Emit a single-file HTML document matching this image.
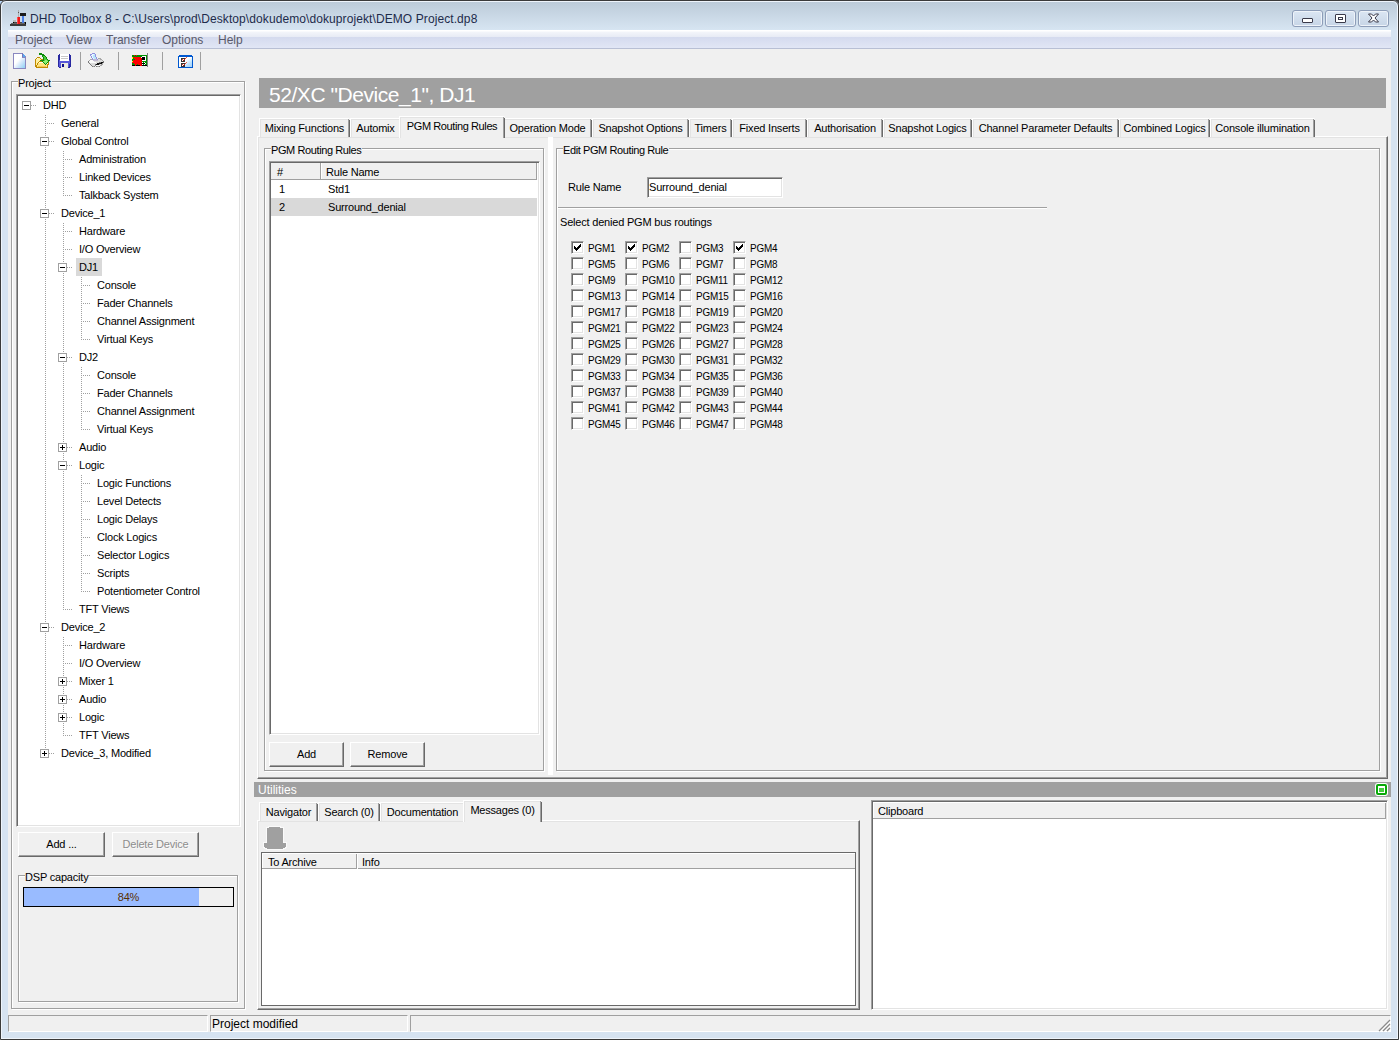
<!DOCTYPE html><html><head><meta charset="utf-8"><style>
*{margin:0;padding:0;box-sizing:content-box}
html,body{width:1399px;height:1040px;overflow:hidden;background:#3c3c3c}
body{position:relative;font-family:"Liberation Sans",sans-serif;font-size:11px;color:#000}
div{position:absolute}
.t{white-space:nowrap;line-height:13px;letter-spacing:-0.2px}
.gl{background:#f0f0f0;padding:0 1px 0 0}
.et{border:1px solid #a0a0a0;box-shadow:inset 1px 1px #fff,1px 1px #fff}
.sk{border:1px solid;border-color:#a0a0a0 #fff #fff #a0a0a0;box-shadow:inset 1px 1px #696969,inset -1px -1px #e3e3e3}
.rb{border:1px solid;border-color:#fff #696969 #696969 #fff;box-shadow:inset -1px -1px #a0a0a0,inset 1px 1px #f0f0f0;background:#f0f0f0;text-align:center;white-space:nowrap;letter-spacing:-0.2px}
.tab{border-left:1px solid #fff;border-top:1px solid #fff;border-right:1px solid #f0f0f0;box-shadow:inset -1px 0 #a0a0a0,inset 1px 1px #e3e3e3;background:#f0f0f0;border-top-left-radius:1px;border-top-right-radius:1px}
.tab:after{content:"";position:absolute;right:-1px;top:1px;bottom:0;width:1px;background:#696969}
.dv{background:repeating-linear-gradient(to bottom,#a0a0a0 0 1px,transparent 1px 2px);width:1px}
.dh{background:repeating-linear-gradient(to right,#a0a0a0 0 1px,transparent 1px 2px);height:1px}
.pm{width:7px;height:7px;border:1px solid #a0a0a0;background:#fff}
.pm:before{content:"";position:absolute;left:1px;top:3px;width:5px;height:1px;background:#000}
.pm.p:after{content:"";position:absolute;left:3px;top:1px;width:1px;height:5px;background:#000}
.cb{width:11px;height:11px;border:1px solid;border-color:#a0a0a0 #fff #fff #a0a0a0;box-shadow:inset 1px 1px #696969,inset -1px -1px #e3e3e3;background:#fff}
</style></head><body>
<div class="" style="left:0px;top:0px;width:1399px;height:1040px;background:#d6e3f1;border-radius:6px 6px 0 0"></div>
<div style="left:0;top:1px;width:2px;height:3px;background:#b8d4f4"></div>
<div class="" style="left:0px;top:0px;width:1397px;height:1038px;border:1px solid #3a3a3a;border-radius:6px 6px 0 0;box-shadow:inset 1px 1px #eef4fb,inset -1px -1px #eef4fb"></div>
<div class="" style="left:2px;top:2px;width:1395px;height:28px;background:linear-gradient(#bccbd9,#d7e5f2);border-radius:5px 5px 0 0"></div>
<svg style="position:absolute;left:10px;top:10px" width="17" height="17" shape-rendering="crispEdges">
<path d="M0 15 L3 12 H16 V16 H0 Z" fill="#4a4a4a"/><rect x="0" y="14" width="16" height="2" fill="#3a3a3a"/><rect x="1" y="13" width="15" height="1" fill="#666"/>
<rect x="3" y="10" width="3" height="2" fill="#b8b8b8"/><rect x="3" y="12" width="1" height="1" fill="#000"/><rect x="15" y="12" width="1" height="2" fill="#000"/>
<rect x="8" y="0" width="1" height="7" fill="#b0b0b0"/><rect x="8" y="2" width="1" height="1" fill="#555"/>
<rect x="7" y="7" width="3" height="7" fill="#f01818"/><rect x="7" y="7" width="1" height="7" fill="#ff5050"/>
<rect x="12" y="6" width="2" height="7" fill="#4a7fe8"/><rect x="10" y="3" width="6" height="3" fill="#1a1a1a"/>
</svg>
<div class="t" style="left:30px;top:11px;font-size:12px;line-height:16px;color:#1e2b4b;letter-spacing:0.09px">DHD Toolbox 8 - C:\Users\prod\Desktop\dokudemo\dokuprojekt\DEMO Project.dp8</div>
<div style="left:1292px;top:10px;width:29px;height:15px;border:1px solid #8d9db8;border-radius:3px;background:linear-gradient(#dbe6f3,#c7d5e6);box-shadow:inset 0 0 0 1px #eef3f9"></div>
<div style="left:1325px;top:10px;width:29px;height:15px;border:1px solid #8d9db8;border-radius:3px;background:linear-gradient(#dbe6f3,#c7d5e6);box-shadow:inset 0 0 0 1px #eef3f9"></div>
<div style="left:1358px;top:10px;width:29px;height:15px;border:1px solid #8d9db8;border-radius:3px;background:linear-gradient(#dbe6f3,#c7d5e6);box-shadow:inset 0 0 0 1px #eef3f9"></div>
<div style="left:1302px;top:18px;width:9px;height:3px;background:#fff;border:1px solid #3a3a4a;border-radius:1px"></div>
<div style="left:1335px;top:14px;width:9px;height:7px;border:1px solid #3a3a4a;background:#fff;border-radius:1px"></div><div style="left:1338px;top:17px;width:3px;height:1px;border:1px solid #3a3a4a;background:#fff"></div>
<svg style="position:absolute;left:1367px;top:13px" width="13" height="11" viewBox="0 0 13 11" ><path d="M1.5 1 H4.5 L6.5 3 L8.5 1 H11.5 L8 5 L11.5 9 H8.5 L6.5 7 L4.5 9 H1.5 L5 5 Z" fill="#fff" stroke="#3a3a4a" stroke-width="1" stroke-linejoin="round"/></svg>
<div class="" style="left:8px;top:30px;width:1383px;height:1002px;background:#f0f0f0"></div>
<div class="" style="left:8px;top:30px;width:1383px;height:18px;background:linear-gradient(#fff 0,#fff 1px,#f3f5fa 2px,#e7ebf5 7px,#d4daee 7px,#e1e6f5 18px);border-bottom:1px solid #b8bfd4"></div>
<div class="t" style="left:15px;top:33px;color:#5a5a6a;font-size:12px;line-height:14px;letter-spacing:0">Project</div>
<div class="t" style="left:66px;top:33px;color:#5a5a6a;font-size:12px;line-height:14px;letter-spacing:0">View</div>
<div class="t" style="left:106px;top:33px;color:#5a5a6a;font-size:12px;line-height:14px;letter-spacing:0">Transfer</div>
<div class="t" style="left:162px;top:33px;color:#5a5a6a;font-size:12px;line-height:14px;letter-spacing:0">Options</div>
<div class="t" style="left:218px;top:33px;color:#5a5a6a;font-size:12px;line-height:14px;letter-spacing:0">Help</div>
<svg style="position:absolute;left:13px;top:53px" width="13" height="16" shape-rendering="crispEdges">
<defs><linearGradient id="gd" x1="0.2" y1="0.25" x2="0.9" y2="1"><stop offset="0.25" stop-color="#fff"/><stop offset="0.6" stop-color="#cfe6fa"/><stop offset="1" stop-color="#96d4f6"/></linearGradient></defs>
<path d="M0 0 H10 V1 H11 V2 H12 V3 H13 V16 H0 Z" fill="#8a88c0"/><path d="M1 1 H9 V5 H12 V15 H1 Z" fill="url(#gd)"/>
<path d="M10 1 H11 V2 H12 V4 H10 Z" fill="#5aa8f0"/><rect x="9" y="0" width="1" height="5" fill="#7a78b8"/><rect x="9" y="4" width="4" height="1" fill="#8a88c0"/>
</svg>
<svg style="position:absolute;left:34px;top:53px" width="16" height="16" shape-rendering="crispEdges"><rect x="5" y="0" width="3" height="1" fill="#0a8a0a"/><rect x="5" y="1" width="5" height="1" fill="#0a8a0a"/><rect x="8" y="2" width="3" height="1" fill="#0a8a0a"/><rect x="8" y="3" width="1" height="1" fill="#0a8a0a"/><rect x="9" y="3" width="2" height="1" fill="#4cc83c"/><rect x="11" y="3" width="1" height="1" fill="#0a8a0a"/><rect x="3" y="4" width="3" height="1" fill="#c08a00"/><rect x="9" y="4" width="1" height="1" fill="#0a8a0a"/><rect x="10" y="4" width="2" height="1" fill="#4cc83c"/><rect x="12" y="4" width="1" height="1" fill="#0a8a0a"/><rect x="2" y="5" width="1" height="1" fill="#c08a00"/><rect x="3" y="5" width="1" height="1" fill="#fffde8"/><rect x="4" y="5" width="2" height="1" fill="#fff2a0"/><rect x="6" y="5" width="1" height="1" fill="#c08a00"/><rect x="9" y="5" width="1" height="1" fill="#0a8a0a"/><rect x="10" y="5" width="2" height="1" fill="#4cc83c"/><rect x="12" y="5" width="1" height="1" fill="#0a8a0a"/><rect x="1" y="6" width="1" height="1" fill="#c08a00"/><rect x="2" y="6" width="5" height="1" fill="#fff2a0"/><rect x="7" y="6" width="2" height="1" fill="#c08a00"/><rect x="9" y="6" width="1" height="1" fill="#0a8a0a"/><rect x="10" y="6" width="3" height="1" fill="#4cc83c"/><rect x="13" y="6" width="1" height="1" fill="#0a8a0a"/><rect x="1" y="7" width="1" height="1" fill="#c08a00"/><rect x="2" y="7" width="4" height="1" fill="#fff2a0"/><rect x="6" y="7" width="4" height="1" fill="#0a8a0a"/><rect x="10" y="7" width="1" height="1" fill="#4cc83c"/><rect x="11" y="7" width="2" height="1" fill="#8ef070"/><rect x="13" y="7" width="1" height="1" fill="#4cc83c"/><rect x="14" y="7" width="2" height="1" fill="#0a8a0a"/><rect x="1" y="8" width="1" height="1" fill="#c08a00"/><rect x="2" y="8" width="3" height="1" fill="#fff2a0"/><rect x="5" y="8" width="3" height="1" fill="#c08a00"/><rect x="8" y="8" width="1" height="1" fill="#0a8a0a"/><rect x="9" y="8" width="5" height="1" fill="#8ef070"/><rect x="14" y="8" width="1" height="1" fill="#0a8a0a"/><rect x="1" y="9" width="1" height="1" fill="#c08a00"/><rect x="2" y="9" width="2" height="1" fill="#fff2a0"/><rect x="4" y="9" width="1" height="1" fill="#c08a00"/><rect x="5" y="9" width="4" height="1" fill="#fffde8"/><rect x="9" y="9" width="1" height="1" fill="#0a8a0a"/><rect x="10" y="9" width="3" height="1" fill="#8ef070"/><rect x="13" y="9" width="1" height="1" fill="#0a8a0a"/><rect x="14" y="9" width="1" height="1" fill="#c08a00"/><rect x="1" y="10" width="1" height="1" fill="#c08a00"/><rect x="2" y="10" width="1" height="1" fill="#fff2a0"/><rect x="3" y="10" width="1" height="1" fill="#c08a00"/><rect x="4" y="10" width="6" height="1" fill="#ffe480"/><rect x="10" y="10" width="1" height="1" fill="#0a8a0a"/><rect x="11" y="10" width="1" height="1" fill="#8ef070"/><rect x="12" y="10" width="1" height="1" fill="#0a8a0a"/><rect x="13" y="10" width="1" height="1" fill="#fffde8"/><rect x="14" y="10" width="1" height="1" fill="#c08a00"/><rect x="1" y="11" width="1" height="1" fill="#c08a00"/><rect x="2" y="11" width="1" height="1" fill="#fff2a0"/><rect x="3" y="11" width="1" height="1" fill="#c08a00"/><rect x="4" y="11" width="7" height="1" fill="#ffe480"/><rect x="11" y="11" width="1" height="1" fill="#0a8a0a"/><rect x="12" y="11" width="1" height="1" fill="#ffe480"/><rect x="13" y="11" width="2" height="1" fill="#c08a00"/><rect x="1" y="12" width="2" height="1" fill="#c08a00"/><rect x="3" y="12" width="10" height="1" fill="#ffe480"/><rect x="13" y="12" width="1" height="1" fill="#c08a00"/><rect x="1" y="13" width="2" height="1" fill="#c08a00"/><rect x="3" y="13" width="1" height="1" fill="#ffe480"/><rect x="4" y="13" width="8" height="1" fill="#f5c850"/><rect x="12" y="13" width="1" height="1" fill="#ffe480"/><rect x="13" y="13" width="1" height="1" fill="#c08a00"/><rect x="2" y="14" width="12" height="1" fill="#c08a00"/></svg>
<svg style="position:absolute;left:58px;top:54px" width="13" height="14" shape-rendering="crispEdges"><rect x="1" y="0" width="1" height="1" fill="#2828a0"/><rect x="2" y="0" width="9" height="1" fill="#ffffff"/><rect x="11" y="0" width="1" height="1" fill="#2828a0"/><rect x="0" y="1" width="2" height="1" fill="#2828a0"/><rect x="2" y="1" width="9" height="1" fill="#ffffff"/><rect x="11" y="1" width="2" height="1" fill="#2828a0"/><rect x="0" y="2" width="2" height="1" fill="#2828a0"/><rect x="2" y="2" width="1" height="1" fill="#ffffff"/><rect x="3" y="2" width="7" height="1" fill="#c8c8c8"/><rect x="10" y="2" width="1" height="1" fill="#ffffff"/><rect x="11" y="2" width="2" height="1" fill="#2828a0"/><rect x="0" y="3" width="2" height="1" fill="#2828a0"/><rect x="2" y="3" width="9" height="1" fill="#ffffff"/><rect x="11" y="3" width="2" height="1" fill="#2828a0"/><rect x="0" y="4" width="2" height="1" fill="#2828a0"/><rect x="2" y="4" width="1" height="1" fill="#ffffff"/><rect x="3" y="4" width="7" height="1" fill="#c8c8c8"/><rect x="10" y="4" width="1" height="1" fill="#ffffff"/><rect x="11" y="4" width="2" height="1" fill="#2828a0"/><rect x="0" y="5" width="2" height="1" fill="#2828a0"/><rect x="2" y="5" width="9" height="1" fill="#ffffff"/><rect x="11" y="5" width="2" height="1" fill="#2828a0"/><rect x="0" y="6" width="1" height="1" fill="#2828a0"/><rect x="1" y="6" width="1" height="1" fill="#5858d8"/><rect x="2" y="6" width="9" height="1" fill="#ffffff"/><rect x="11" y="6" width="1" height="1" fill="#5858d8"/><rect x="12" y="6" width="1" height="1" fill="#2828a0"/><rect x="0" y="7" width="1" height="1" fill="#2828a0"/><rect x="1" y="7" width="11" height="1" fill="#5858d8"/><rect x="12" y="7" width="1" height="1" fill="#2828a0"/><rect x="0" y="8" width="1" height="1" fill="#2828a0"/><rect x="1" y="8" width="11" height="1" fill="#5858d8"/><rect x="12" y="8" width="1" height="1" fill="#2828a0"/><rect x="0" y="9" width="1" height="1" fill="#2828a0"/><rect x="1" y="9" width="2" height="1" fill="#5858d8"/><rect x="3" y="9" width="7" height="1" fill="#ebebe0"/><rect x="10" y="9" width="2" height="1" fill="#5858d8"/><rect x="12" y="9" width="1" height="1" fill="#2828a0"/><rect x="0" y="10" width="1" height="1" fill="#2828a0"/><rect x="1" y="10" width="2" height="1" fill="#5858d8"/><rect x="3" y="10" width="1" height="1" fill="#ebebe0"/><rect x="4" y="10" width="2" height="1" fill="#0c0c88"/><rect x="6" y="10" width="4" height="1" fill="#ebebe0"/><rect x="10" y="10" width="1" height="1" fill="#5858d8"/><rect x="11" y="10" width="2" height="1" fill="#2828a0"/><rect x="0" y="11" width="1" height="1" fill="#2828a0"/><rect x="1" y="11" width="2" height="1" fill="#5858d8"/><rect x="3" y="11" width="1" height="1" fill="#ebebe0"/><rect x="4" y="11" width="2" height="1" fill="#0c0c88"/><rect x="6" y="11" width="4" height="1" fill="#ebebe0"/><rect x="10" y="11" width="1" height="1" fill="#5858d8"/><rect x="11" y="11" width="2" height="1" fill="#2828a0"/><rect x="0" y="12" width="1" height="1" fill="#2828a0"/><rect x="1" y="12" width="2" height="1" fill="#5858d8"/><rect x="3" y="12" width="1" height="1" fill="#ebebe0"/><rect x="4" y="12" width="2" height="1" fill="#0c0c88"/><rect x="6" y="12" width="4" height="1" fill="#ebebe0"/><rect x="10" y="12" width="1" height="1" fill="#5858d8"/><rect x="11" y="12" width="2" height="1" fill="#2828a0"/><rect x="1" y="13" width="2" height="1" fill="#2828a0"/><rect x="3" y="13" width="7" height="1" fill="#ebebe0"/><rect x="10" y="13" width="2" height="1" fill="#2828a0"/></svg>
<svg style="position:absolute;left:88px;top:53px" width="16" height="16" shape-rendering="crispEdges"><rect x="4" y="0" width="3" height="1" fill="#9090e0"/><rect x="2" y="1" width="2" height="1" fill="#9090e0"/><rect x="4" y="1" width="2" height="1" fill="#e8f8ff"/><rect x="6" y="1" width="1" height="1" fill="#b8e4fc"/><rect x="7" y="1" width="1" height="1" fill="#9090e0"/><rect x="2" y="2" width="1" height="1" fill="#9090e0"/><rect x="3" y="2" width="2" height="1" fill="#e8f8ff"/><rect x="5" y="2" width="2" height="1" fill="#b8e4fc"/><rect x="7" y="2" width="1" height="1" fill="#9090e0"/><rect x="3" y="3" width="1" height="1" fill="#9090e0"/><rect x="4" y="3" width="1" height="1" fill="#e8f8ff"/><rect x="5" y="3" width="2" height="1" fill="#b8e4fc"/><rect x="7" y="3" width="1" height="1" fill="#9090e0"/><rect x="3" y="4" width="1" height="1" fill="#9090e0"/><rect x="4" y="4" width="1" height="1" fill="#e8f8ff"/><rect x="5" y="4" width="3" height="1" fill="#b8e4fc"/><rect x="8" y="4" width="1" height="1" fill="#9090e0"/><rect x="4" y="5" width="1" height="1" fill="#9090e0"/><rect x="5" y="5" width="1" height="1" fill="#e8f8ff"/><rect x="6" y="5" width="2" height="1" fill="#b8e4fc"/><rect x="8" y="5" width="1" height="1" fill="#9090e0"/><rect x="10" y="5" width="3" height="1" fill="#a8a8a8"/><rect x="2" y="6" width="2" height="1" fill="#a8a8a8"/><rect x="4" y="6" width="1" height="1" fill="#9090e0"/><rect x="5" y="6" width="4" height="1" fill="#c0b8d0"/><rect x="9" y="6" width="1" height="1" fill="#9090e0"/><rect x="10" y="6" width="2" height="1" fill="#dcdcdc"/><rect x="12" y="6" width="2" height="1" fill="#a8a8a8"/><rect x="1" y="7" width="1" height="1" fill="#a8a8a8"/><rect x="2" y="7" width="3" height="1" fill="#fafafa"/><rect x="5" y="7" width="5" height="1" fill="#c0b8d0"/><rect x="10" y="7" width="4" height="1" fill="#dcdcdc"/><rect x="14" y="7" width="1" height="1" fill="#a8a8a8"/><rect x="0" y="8" width="1" height="1" fill="#7a7a7a"/><rect x="1" y="8" width="5" height="1" fill="#fafafa"/><rect x="6" y="8" width="9" height="1" fill="#dcdcdc"/><rect x="15" y="8" width="1" height="1" fill="#7a7a7a"/><rect x="0" y="9" width="1" height="1" fill="#7a7a7a"/><rect x="1" y="9" width="1" height="1" fill="#dcdcdc"/><rect x="2" y="9" width="6" height="1" fill="#fafafa"/><rect x="8" y="9" width="3" height="1" fill="#dcdcdc"/><rect x="11" y="9" width="2" height="1" fill="#7a7a7a"/><rect x="13" y="9" width="2" height="1" fill="#101010"/><rect x="15" y="9" width="1" height="1" fill="#7a7a7a"/><rect x="1" y="10" width="1" height="1" fill="#7a7a7a"/><rect x="2" y="10" width="7" height="1" fill="#dcdcdc"/><rect x="9" y="10" width="5" height="1" fill="#101010"/><rect x="14" y="10" width="1" height="1" fill="#a8a8a8"/><rect x="2" y="11" width="1" height="1" fill="#7a7a7a"/><rect x="3" y="11" width="4" height="1" fill="#dcdcdc"/><rect x="7" y="11" width="1" height="1" fill="#7a7a7a"/><rect x="8" y="11" width="3" height="1" fill="#101010"/><rect x="11" y="11" width="1" height="1" fill="#a8a8a8"/><rect x="12" y="11" width="1" height="1" fill="#dcdcdc"/><rect x="13" y="11" width="2" height="1" fill="#a8a8a8"/><rect x="3" y="12" width="1" height="1" fill="#7a7a7a"/><rect x="4" y="12" width="3" height="1" fill="#dcdcdc"/><rect x="7" y="12" width="1" height="1" fill="#7a7a7a"/><rect x="8" y="12" width="4" height="1" fill="#fafafa"/><rect x="12" y="12" width="2" height="1" fill="#a8a8a8"/><rect x="4" y="13" width="1" height="1" fill="#7a7a7a"/><rect x="5" y="13" width="1" height="1" fill="#a8a8a8"/><rect x="6" y="13" width="1" height="1" fill="#7a7a7a"/><rect x="8" y="13" width="1" height="1" fill="#7a7a7a"/><rect x="9" y="13" width="2" height="1" fill="#a8a8a8"/><rect x="11" y="13" width="1" height="1" fill="#7a7a7a"/></svg>
<svg style="position:absolute;left:132px;top:55px" width="15" height="11" shape-rendering="crispEdges"><rect x="0" y="0" width="2" height="1" fill="#009000"/><rect x="2" y="0" width="1" height="1" fill="#ff0000"/><rect x="3" y="0" width="1" height="1" fill="#009000"/><rect x="4" y="0" width="1" height="1" fill="#ff0000"/><rect x="5" y="0" width="10" height="1" fill="#009000"/><rect x="0" y="1" width="10" height="1" fill="#009000"/><rect x="10" y="1" width="4" height="1" fill="#ffffff"/><rect x="14" y="1" width="1" height="1" fill="#009000"/><rect x="0" y="2" width="1" height="1" fill="#ffff00"/><rect x="1" y="2" width="8" height="1" fill="#ff0000"/><rect x="9" y="2" width="1" height="1" fill="#ffffff"/><rect x="10" y="2" width="3" height="1" fill="#000000"/><rect x="13" y="2" width="1" height="1" fill="#ffffff"/><rect x="14" y="2" width="1" height="1" fill="#009000"/><rect x="0" y="3" width="1" height="1" fill="#ffff00"/><rect x="1" y="3" width="1" height="1" fill="#009000"/><rect x="2" y="3" width="7" height="1" fill="#ff0000"/><rect x="9" y="3" width="1" height="1" fill="#c00000"/><rect x="10" y="3" width="3" height="1" fill="#000000"/><rect x="13" y="3" width="1" height="1" fill="#ffffff"/><rect x="14" y="3" width="1" height="1" fill="#009000"/><rect x="0" y="4" width="3" height="1" fill="#009000"/><rect x="3" y="4" width="6" height="1" fill="#ff0000"/><rect x="9" y="4" width="1" height="1" fill="#c00000"/><rect x="10" y="4" width="3" height="1" fill="#000000"/><rect x="13" y="4" width="1" height="1" fill="#ffffff"/><rect x="14" y="4" width="1" height="1" fill="#009000"/><rect x="0" y="5" width="1" height="1" fill="#009000"/><rect x="1" y="5" width="8" height="1" fill="#ff0000"/><rect x="9" y="5" width="1" height="1" fill="#c00000"/><rect x="10" y="5" width="4" height="1" fill="#ffffff"/><rect x="14" y="5" width="1" height="1" fill="#009000"/><rect x="0" y="6" width="1" height="1" fill="#ffff00"/><rect x="1" y="6" width="9" height="1" fill="#ff0000"/><rect x="10" y="6" width="5" height="1" fill="#009000"/><rect x="0" y="7" width="9" height="1" fill="#ff0000"/><rect x="9" y="7" width="1" height="1" fill="#c00000"/><rect x="10" y="7" width="1" height="1" fill="#ffffff"/><rect x="11" y="7" width="1" height="1" fill="#009000"/><rect x="12" y="7" width="1" height="1" fill="#ffffff"/><rect x="13" y="7" width="2" height="1" fill="#009000"/><rect x="0" y="8" width="2" height="1" fill="#009000"/><rect x="2" y="8" width="7" height="1" fill="#ff0000"/><rect x="9" y="8" width="1" height="1" fill="#c00000"/><rect x="10" y="8" width="3" height="1" fill="#000000"/><rect x="13" y="8" width="1" height="1" fill="#ffffff"/><rect x="14" y="8" width="1" height="1" fill="#009000"/><rect x="0" y="9" width="3" height="1" fill="#009000"/><rect x="3" y="9" width="2" height="1" fill="#ff0000"/><rect x="5" y="9" width="1" height="1" fill="#009000"/><rect x="6" y="9" width="3" height="1" fill="#ff0000"/><rect x="9" y="9" width="1" height="1" fill="#c00000"/><rect x="10" y="9" width="1" height="1" fill="#ffffff"/><rect x="11" y="9" width="1" height="1" fill="#009000"/><rect x="12" y="9" width="1" height="1" fill="#ffffff"/><rect x="13" y="9" width="2" height="1" fill="#009000"/><rect x="0" y="10" width="3" height="1" fill="#000000"/><rect x="3" y="10" width="1" height="1" fill="#ff0000"/><rect x="4" y="10" width="4" height="1" fill="#000000"/><rect x="8" y="10" width="2" height="1" fill="#ff0000"/><rect x="10" y="10" width="5" height="1" fill="#000000"/></svg>
<div style="left:147px;top:53px;width:1px;height:14px;background:#808080"></div>
<svg style="position:absolute;left:178px;top:55px" width="15" height="13" shape-rendering="crispEdges">
<defs><linearGradient id="gc" x1="0" y1="0" x2="1" y2="1"><stop offset="0.45" stop-color="#fff"/><stop offset="0.75" stop-color="#b8e0fc"/><stop offset="1" stop-color="#a8d0f8"/></linearGradient></defs>
<path d="M1 0 H14 V1 H15 V13 H0 V1 H1 Z" fill="#0058d0"/><rect x="1" y="2" width="13" height="10" fill="url(#gc)"/>
<rect x="3" y="3" width="4" height="4" fill="#333"/><rect x="4" y="4" width="2" height="2" fill="#fff"/>
<rect x="3" y="8" width="4" height="4" fill="#333"/><rect x="4" y="9" width="2" height="2" fill="#fff"/>
<rect x="4" y="4" width="1" height="1" fill="#f05030"/><rect x="5" y="5" width="1" height="1" fill="#c02010"/><rect x="6" y="4" width="1" height="1" fill="#c02010"/><rect x="7" y="3" width="1" height="1" fill="#e04020"/><rect x="8" y="2" width="1" height="1" fill="#f06040"/>
<rect x="4" y="9" width="1" height="1" fill="#f05030"/><rect x="5" y="10" width="1" height="1" fill="#c02010"/><rect x="6" y="9" width="1" height="1" fill="#c02010"/><rect x="7" y="8" width="1" height="1" fill="#e04020"/><rect x="8" y="7" width="1" height="1" fill="#f06040"/>
</svg>
<div class="" style="left:80px;top:52px;width:1px;height:18px;background:#a0a0a0"></div>
<div class="" style="left:118px;top:52px;width:1px;height:18px;background:#a0a0a0"></div>
<div class="" style="left:162px;top:52px;width:1px;height:18px;background:#a0a0a0"></div>
<div class="" style="left:200px;top:52px;width:1px;height:18px;background:#a0a0a0"></div>
<div class="et" style="left:11px;top:81px;width:232px;height:926px"></div>
<div class="t gl" style="left:18px;top:77px;">Project</div>
<div class="sk" style="left:16px;top:94px;width:223px;height:731px;background:#fff"></div>
<div class="dv" style="left:45px;top:115px;height:639px"></div>
<div class="dv" style="left:63px;top:151px;height:45px"></div>
<div class="dv" style="left:63px;top:223px;height:387px"></div>
<div class="dv" style="left:81px;top:277px;height:63px"></div>
<div class="dv" style="left:81px;top:367px;height:63px"></div>
<div class="dv" style="left:81px;top:475px;height:117px"></div>
<div class="dv" style="left:63px;top:637px;height:99px"></div>
<div class="dh" style="left:31px;top:105px;width:5px"></div>
<div class="dh" style="left:47px;top:123px;width:7px"></div>
<div class="dh" style="left:49px;top:141px;width:5px"></div>
<div class="dh" style="left:65px;top:159px;width:7px"></div>
<div class="dh" style="left:65px;top:177px;width:7px"></div>
<div class="dh" style="left:65px;top:195px;width:7px"></div>
<div class="dh" style="left:49px;top:213px;width:5px"></div>
<div class="dh" style="left:65px;top:231px;width:7px"></div>
<div class="dh" style="left:65px;top:249px;width:7px"></div>
<div class="dh" style="left:67px;top:267px;width:5px"></div>
<div class="dh" style="left:83px;top:285px;width:7px"></div>
<div class="dh" style="left:83px;top:303px;width:7px"></div>
<div class="dh" style="left:83px;top:321px;width:7px"></div>
<div class="dh" style="left:83px;top:339px;width:7px"></div>
<div class="dh" style="left:67px;top:357px;width:5px"></div>
<div class="dh" style="left:83px;top:375px;width:7px"></div>
<div class="dh" style="left:83px;top:393px;width:7px"></div>
<div class="dh" style="left:83px;top:411px;width:7px"></div>
<div class="dh" style="left:83px;top:429px;width:7px"></div>
<div class="dh" style="left:67px;top:447px;width:5px"></div>
<div class="dh" style="left:67px;top:465px;width:5px"></div>
<div class="dh" style="left:83px;top:483px;width:7px"></div>
<div class="dh" style="left:83px;top:501px;width:7px"></div>
<div class="dh" style="left:83px;top:519px;width:7px"></div>
<div class="dh" style="left:83px;top:537px;width:7px"></div>
<div class="dh" style="left:83px;top:555px;width:7px"></div>
<div class="dh" style="left:83px;top:573px;width:7px"></div>
<div class="dh" style="left:83px;top:591px;width:7px"></div>
<div class="dh" style="left:65px;top:609px;width:7px"></div>
<div class="dh" style="left:49px;top:627px;width:5px"></div>
<div class="dh" style="left:65px;top:645px;width:7px"></div>
<div class="dh" style="left:65px;top:663px;width:7px"></div>
<div class="dh" style="left:67px;top:681px;width:5px"></div>
<div class="dh" style="left:67px;top:699px;width:5px"></div>
<div class="dh" style="left:67px;top:717px;width:5px"></div>
<div class="dh" style="left:65px;top:735px;width:7px"></div>
<div class="dh" style="left:49px;top:753px;width:5px"></div>
<div class="pm" style="left:22px;top:101px"></div>
<div class="t" style="left:43px;top:99px;">DHD</div>
<div class="t" style="left:61px;top:117px;">General</div>
<div class="pm" style="left:40px;top:137px"></div>
<div class="t" style="left:61px;top:135px;">Global Control</div>
<div class="t" style="left:79px;top:153px;">Administration</div>
<div class="t" style="left:79px;top:171px;">Linked Devices</div>
<div class="t" style="left:79px;top:189px;">Talkback System</div>
<div class="pm" style="left:40px;top:209px"></div>
<div class="t" style="left:61px;top:207px;">Device_1</div>
<div class="t" style="left:79px;top:225px;">Hardware</div>
<div class="t" style="left:79px;top:243px;">I/O Overview</div>
<div class="pm" style="left:58px;top:263px"></div>
<div class="" style="left:76px;top:258px;width:26px;height:18px;background:#d9d9d9"></div>
<div class="t" style="left:79px;top:261px;">DJ1</div>
<div class="t" style="left:97px;top:279px;">Console</div>
<div class="t" style="left:97px;top:297px;">Fader Channels</div>
<div class="t" style="left:97px;top:315px;">Channel Assignment</div>
<div class="t" style="left:97px;top:333px;">Virtual Keys</div>
<div class="pm" style="left:58px;top:353px"></div>
<div class="t" style="left:79px;top:351px;">DJ2</div>
<div class="t" style="left:97px;top:369px;">Console</div>
<div class="t" style="left:97px;top:387px;">Fader Channels</div>
<div class="t" style="left:97px;top:405px;">Channel Assignment</div>
<div class="t" style="left:97px;top:423px;">Virtual Keys</div>
<div class="pm p" style="left:58px;top:443px"></div>
<div class="t" style="left:79px;top:441px;">Audio</div>
<div class="pm" style="left:58px;top:461px"></div>
<div class="t" style="left:79px;top:459px;">Logic</div>
<div class="t" style="left:97px;top:477px;">Logic Functions</div>
<div class="t" style="left:97px;top:495px;">Level Detects</div>
<div class="t" style="left:97px;top:513px;">Logic Delays</div>
<div class="t" style="left:97px;top:531px;">Clock Logics</div>
<div class="t" style="left:97px;top:549px;">Selector Logics</div>
<div class="t" style="left:97px;top:567px;">Scripts</div>
<div class="t" style="left:97px;top:585px;">Potentiometer Control</div>
<div class="t" style="left:79px;top:603px;">TFT Views</div>
<div class="pm" style="left:40px;top:623px"></div>
<div class="t" style="left:61px;top:621px;">Device_2</div>
<div class="t" style="left:79px;top:639px;">Hardware</div>
<div class="t" style="left:79px;top:657px;">I/O Overview</div>
<div class="pm p" style="left:58px;top:677px"></div>
<div class="t" style="left:79px;top:675px;">Mixer 1</div>
<div class="pm p" style="left:58px;top:695px"></div>
<div class="t" style="left:79px;top:693px;">Audio</div>
<div class="pm p" style="left:58px;top:713px"></div>
<div class="t" style="left:79px;top:711px;">Logic</div>
<div class="t" style="left:79px;top:729px;">TFT Views</div>
<div class="pm p" style="left:40px;top:749px"></div>
<div class="t" style="left:61px;top:747px;">Device_3, Modified</div>
<div class="rb" style="left:18px;top:832px;width:85px;height:23px;line-height:22px;">Add ...</div>
<div class="rb" style="left:112px;top:832px;width:85px;height:23px;line-height:22px;color:#8d8d8d;text-shadow:1px 1px 0 rgba(255,255,255,0.6)">Delete Device</div>
<div class="et" style="left:18px;top:875px;width:218px;height:125px"></div>
<div class="t gl" style="left:25px;top:871px;">DSP capacity</div>
<div class="" style="left:23px;top:887px;width:209px;height:18px;border:1px solid #000;background:#f0f0f0"></div>
<div class="" style="left:24px;top:888px;width:175px;height:18px;background:#99bbff"></div>
<div class="t" style="left:24px;top:891px;width:209px;text-align:center;color:#5a3000">84%</div>
<div class="" style="left:259px;top:78px;width:1127px;height:30px;background:#a0a0a0"></div>
<div class="t" style="left:269px;top:83px;font-size:21px;line-height:24px;color:#fff;letter-spacing:-0.45px">52/XC "Device_1", DJ1</div>
<div class="" style="left:257px;top:136px;width:1129px;height:641px;border-left:1px solid #fff;border-top:1px solid #fff;border-right:1px solid #696969;border-bottom:1px solid #696969;box-shadow:inset -1px -1px #a0a0a0,inset 1px 1px #e3e3e3;background:#f0f0f0"></div>
<div class="tab" style="left:259px;top:118px;width:89px;height:18px"><div class="t" style="left:0;width:100%;text-align:center;top:3px">Mixing Functions</div></div>
<div class="tab" style="left:350px;top:118px;width:49px;height:18px"><div class="t" style="left:0;width:100%;text-align:center;top:3px">Automix</div></div>
<div class="tab" style="left:503px;top:118px;width:87px;height:18px"><div class="t" style="left:0;width:100%;text-align:center;top:3px">Operation Mode</div></div>
<div class="tab" style="left:592px;top:118px;width:95px;height:18px"><div class="t" style="left:0;width:100%;text-align:center;top:3px">Snapshot Options</div></div>
<div class="tab" style="left:689px;top:118px;width:41px;height:18px"><div class="t" style="left:0;width:100%;text-align:center;top:3px">Timers</div></div>
<div class="tab" style="left:732px;top:118px;width:73px;height:18px"><div class="t" style="left:0;width:100%;text-align:center;top:3px">Fixed Inserts</div></div>
<div class="tab" style="left:807px;top:118px;width:74px;height:18px"><div class="t" style="left:0;width:100%;text-align:center;top:3px">Authorisation</div></div>
<div class="tab" style="left:883px;top:118px;width:87px;height:18px"><div class="t" style="left:0;width:100%;text-align:center;top:3px">Snapshot Logics</div></div>
<div class="tab" style="left:972px;top:118px;width:145px;height:18px"><div class="t" style="left:0;width:100%;text-align:center;top:3px">Channel Parameter Defaults</div></div>
<div class="tab" style="left:1119px;top:118px;width:89px;height:18px"><div class="t" style="left:0;width:100%;text-align:center;top:3px">Combined Logics</div></div>
<div class="tab" style="left:1210px;top:118px;width:103px;height:18px"><div class="t" style="left:0;width:100%;text-align:center;top:3px">Console illumination</div></div>
<div class="tab" style="left:399px;top:116px;width:104px;height:21px;z-index:2"><div class="t" style="left:0;width:100%;text-align:center;top:3px;letter-spacing:-0.4px">PGM Routing Rules</div></div>
<div class="et" style="left:264px;top:148px;width:278px;height:621px"></div>
<div class="t gl" style="left:271px;top:144px;letter-spacing:-0.4px">PGM Routing Rules</div>
<div class="sk" style="left:269px;top:161px;width:269px;height:572px;background:#fff"></div>
<div class="" style="left:271px;top:163px;width:266px;height:16px;background:#f0f0f0;border-bottom:1px solid #a0a0a0;box-shadow:inset -1px 0 #a0a0a0"></div>
<div class="" style="left:320px;top:163px;width:1px;height:16px;background:#a0a0a0"></div>
<div class="" style="left:321px;top:163px;width:1px;height:16px;background:#fff"></div>
<div class="t" style="left:277px;top:166px;">#</div>
<div class="t" style="left:326px;top:166px;">Rule Name</div>
<div class="" style="left:271px;top:198px;width:266px;height:18px;background:#d9d9d9"></div>
<div class="t" style="left:279px;top:183px;">1</div>
<div class="t" style="left:328px;top:183px;">Std1</div>
<div class="t" style="left:279px;top:201px;">2</div>
<div class="t" style="left:328px;top:201px;">Surround_denial</div>
<div class="rb" style="left:269px;top:742px;width:73px;height:23px;line-height:22px;">Add</div>
<div class="rb" style="left:350px;top:742px;width:73px;height:23px;line-height:22px;">Remove</div>
<div class="" style="left:548px;top:137px;width:5px;height:638px;background:#fff"></div>
<div class="et" style="left:556px;top:148px;width:822px;height:621px"></div>
<div class="t gl" style="left:563px;top:144px;letter-spacing:-0.4px">Edit PGM Routing Rule</div>
<style>.pg{letter-spacing:-0.4px}</style>
<div class="t" style="left:568px;top:181px;">Rule Name</div>
<div class="sk" style="left:647px;top:177px;width:134px;height:19px;background:#fff"></div>
<div class="t" style="left:649px;top:181px;">Surround_denial</div>
<div class="" style="left:558px;top:207px;width:489px;height:1px;background:#a0a0a0"></div>
<div class="" style="left:558px;top:208px;width:489px;height:1px;background:#fff"></div>
<div class="t" style="left:560px;top:216px;">Select denied PGM bus routings</div>
<div class="cb" style="left:571px;top:241px"><svg width="7" height="7" viewBox="0 0 7 7" style="position:absolute;left:2px;top:2px" shape-rendering="crispEdges"><rect x="6" y="0" width="1" height="1"/><rect x="5" y="1" width="1" height="1"/><rect x="6" y="1" width="1" height="1"/><rect x="0" y="2" width="1" height="1"/><rect x="4" y="2" width="1" height="1"/><rect x="5" y="2" width="1" height="1"/><rect x="6" y="2" width="1" height="1"/><rect x="0" y="3" width="1" height="1"/><rect x="1" y="3" width="1" height="1"/><rect x="3" y="3" width="1" height="1"/><rect x="4" y="3" width="1" height="1"/><rect x="5" y="3" width="1" height="1"/><rect x="0" y="4" width="1" height="1"/><rect x="1" y="4" width="1" height="1"/><rect x="2" y="4" width="1" height="1"/><rect x="3" y="4" width="1" height="1"/><rect x="4" y="4" width="1" height="1"/><rect x="1" y="5" width="1" height="1"/><rect x="2" y="5" width="1" height="1"/><rect x="3" y="5" width="1" height="1"/><rect x="2" y="6" width="1" height="1"/></svg></div>
<div class="t" style="left:588px;top:242px;transform:scaleX(0.9);transform-origin:0 0">PGM1</div>
<div class="cb" style="left:625px;top:241px"><svg width="7" height="7" viewBox="0 0 7 7" style="position:absolute;left:2px;top:2px" shape-rendering="crispEdges"><rect x="6" y="0" width="1" height="1"/><rect x="5" y="1" width="1" height="1"/><rect x="6" y="1" width="1" height="1"/><rect x="0" y="2" width="1" height="1"/><rect x="4" y="2" width="1" height="1"/><rect x="5" y="2" width="1" height="1"/><rect x="6" y="2" width="1" height="1"/><rect x="0" y="3" width="1" height="1"/><rect x="1" y="3" width="1" height="1"/><rect x="3" y="3" width="1" height="1"/><rect x="4" y="3" width="1" height="1"/><rect x="5" y="3" width="1" height="1"/><rect x="0" y="4" width="1" height="1"/><rect x="1" y="4" width="1" height="1"/><rect x="2" y="4" width="1" height="1"/><rect x="3" y="4" width="1" height="1"/><rect x="4" y="4" width="1" height="1"/><rect x="1" y="5" width="1" height="1"/><rect x="2" y="5" width="1" height="1"/><rect x="3" y="5" width="1" height="1"/><rect x="2" y="6" width="1" height="1"/></svg></div>
<div class="t" style="left:642px;top:242px;transform:scaleX(0.9);transform-origin:0 0">PGM2</div>
<div class="cb" style="left:679px;top:241px"></div>
<div class="t" style="left:696px;top:242px;transform:scaleX(0.9);transform-origin:0 0">PGM3</div>
<div class="cb" style="left:733px;top:241px"><svg width="7" height="7" viewBox="0 0 7 7" style="position:absolute;left:2px;top:2px" shape-rendering="crispEdges"><rect x="6" y="0" width="1" height="1"/><rect x="5" y="1" width="1" height="1"/><rect x="6" y="1" width="1" height="1"/><rect x="0" y="2" width="1" height="1"/><rect x="4" y="2" width="1" height="1"/><rect x="5" y="2" width="1" height="1"/><rect x="6" y="2" width="1" height="1"/><rect x="0" y="3" width="1" height="1"/><rect x="1" y="3" width="1" height="1"/><rect x="3" y="3" width="1" height="1"/><rect x="4" y="3" width="1" height="1"/><rect x="5" y="3" width="1" height="1"/><rect x="0" y="4" width="1" height="1"/><rect x="1" y="4" width="1" height="1"/><rect x="2" y="4" width="1" height="1"/><rect x="3" y="4" width="1" height="1"/><rect x="4" y="4" width="1" height="1"/><rect x="1" y="5" width="1" height="1"/><rect x="2" y="5" width="1" height="1"/><rect x="3" y="5" width="1" height="1"/><rect x="2" y="6" width="1" height="1"/></svg></div>
<div class="t" style="left:750px;top:242px;transform:scaleX(0.9);transform-origin:0 0">PGM4</div>
<div class="cb" style="left:571px;top:257px"></div>
<div class="t" style="left:588px;top:258px;transform:scaleX(0.9);transform-origin:0 0">PGM5</div>
<div class="cb" style="left:625px;top:257px"></div>
<div class="t" style="left:642px;top:258px;transform:scaleX(0.9);transform-origin:0 0">PGM6</div>
<div class="cb" style="left:679px;top:257px"></div>
<div class="t" style="left:696px;top:258px;transform:scaleX(0.9);transform-origin:0 0">PGM7</div>
<div class="cb" style="left:733px;top:257px"></div>
<div class="t" style="left:750px;top:258px;transform:scaleX(0.9);transform-origin:0 0">PGM8</div>
<div class="cb" style="left:571px;top:273px"></div>
<div class="t" style="left:588px;top:274px;transform:scaleX(0.9);transform-origin:0 0">PGM9</div>
<div class="cb" style="left:625px;top:273px"></div>
<div class="t" style="left:642px;top:274px;transform:scaleX(0.9);transform-origin:0 0">PGM10</div>
<div class="cb" style="left:679px;top:273px"></div>
<div class="t" style="left:696px;top:274px;transform:scaleX(0.9);transform-origin:0 0">PGM11</div>
<div class="cb" style="left:733px;top:273px"></div>
<div class="t" style="left:750px;top:274px;transform:scaleX(0.9);transform-origin:0 0">PGM12</div>
<div class="cb" style="left:571px;top:289px"></div>
<div class="t" style="left:588px;top:290px;transform:scaleX(0.9);transform-origin:0 0">PGM13</div>
<div class="cb" style="left:625px;top:289px"></div>
<div class="t" style="left:642px;top:290px;transform:scaleX(0.9);transform-origin:0 0">PGM14</div>
<div class="cb" style="left:679px;top:289px"></div>
<div class="t" style="left:696px;top:290px;transform:scaleX(0.9);transform-origin:0 0">PGM15</div>
<div class="cb" style="left:733px;top:289px"></div>
<div class="t" style="left:750px;top:290px;transform:scaleX(0.9);transform-origin:0 0">PGM16</div>
<div class="cb" style="left:571px;top:305px"></div>
<div class="t" style="left:588px;top:306px;transform:scaleX(0.9);transform-origin:0 0">PGM17</div>
<div class="cb" style="left:625px;top:305px"></div>
<div class="t" style="left:642px;top:306px;transform:scaleX(0.9);transform-origin:0 0">PGM18</div>
<div class="cb" style="left:679px;top:305px"></div>
<div class="t" style="left:696px;top:306px;transform:scaleX(0.9);transform-origin:0 0">PGM19</div>
<div class="cb" style="left:733px;top:305px"></div>
<div class="t" style="left:750px;top:306px;transform:scaleX(0.9);transform-origin:0 0">PGM20</div>
<div class="cb" style="left:571px;top:321px"></div>
<div class="t" style="left:588px;top:322px;transform:scaleX(0.9);transform-origin:0 0">PGM21</div>
<div class="cb" style="left:625px;top:321px"></div>
<div class="t" style="left:642px;top:322px;transform:scaleX(0.9);transform-origin:0 0">PGM22</div>
<div class="cb" style="left:679px;top:321px"></div>
<div class="t" style="left:696px;top:322px;transform:scaleX(0.9);transform-origin:0 0">PGM23</div>
<div class="cb" style="left:733px;top:321px"></div>
<div class="t" style="left:750px;top:322px;transform:scaleX(0.9);transform-origin:0 0">PGM24</div>
<div class="cb" style="left:571px;top:337px"></div>
<div class="t" style="left:588px;top:338px;transform:scaleX(0.9);transform-origin:0 0">PGM25</div>
<div class="cb" style="left:625px;top:337px"></div>
<div class="t" style="left:642px;top:338px;transform:scaleX(0.9);transform-origin:0 0">PGM26</div>
<div class="cb" style="left:679px;top:337px"></div>
<div class="t" style="left:696px;top:338px;transform:scaleX(0.9);transform-origin:0 0">PGM27</div>
<div class="cb" style="left:733px;top:337px"></div>
<div class="t" style="left:750px;top:338px;transform:scaleX(0.9);transform-origin:0 0">PGM28</div>
<div class="cb" style="left:571px;top:353px"></div>
<div class="t" style="left:588px;top:354px;transform:scaleX(0.9);transform-origin:0 0">PGM29</div>
<div class="cb" style="left:625px;top:353px"></div>
<div class="t" style="left:642px;top:354px;transform:scaleX(0.9);transform-origin:0 0">PGM30</div>
<div class="cb" style="left:679px;top:353px"></div>
<div class="t" style="left:696px;top:354px;transform:scaleX(0.9);transform-origin:0 0">PGM31</div>
<div class="cb" style="left:733px;top:353px"></div>
<div class="t" style="left:750px;top:354px;transform:scaleX(0.9);transform-origin:0 0">PGM32</div>
<div class="cb" style="left:571px;top:369px"></div>
<div class="t" style="left:588px;top:370px;transform:scaleX(0.9);transform-origin:0 0">PGM33</div>
<div class="cb" style="left:625px;top:369px"></div>
<div class="t" style="left:642px;top:370px;transform:scaleX(0.9);transform-origin:0 0">PGM34</div>
<div class="cb" style="left:679px;top:369px"></div>
<div class="t" style="left:696px;top:370px;transform:scaleX(0.9);transform-origin:0 0">PGM35</div>
<div class="cb" style="left:733px;top:369px"></div>
<div class="t" style="left:750px;top:370px;transform:scaleX(0.9);transform-origin:0 0">PGM36</div>
<div class="cb" style="left:571px;top:385px"></div>
<div class="t" style="left:588px;top:386px;transform:scaleX(0.9);transform-origin:0 0">PGM37</div>
<div class="cb" style="left:625px;top:385px"></div>
<div class="t" style="left:642px;top:386px;transform:scaleX(0.9);transform-origin:0 0">PGM38</div>
<div class="cb" style="left:679px;top:385px"></div>
<div class="t" style="left:696px;top:386px;transform:scaleX(0.9);transform-origin:0 0">PGM39</div>
<div class="cb" style="left:733px;top:385px"></div>
<div class="t" style="left:750px;top:386px;transform:scaleX(0.9);transform-origin:0 0">PGM40</div>
<div class="cb" style="left:571px;top:401px"></div>
<div class="t" style="left:588px;top:402px;transform:scaleX(0.9);transform-origin:0 0">PGM41</div>
<div class="cb" style="left:625px;top:401px"></div>
<div class="t" style="left:642px;top:402px;transform:scaleX(0.9);transform-origin:0 0">PGM42</div>
<div class="cb" style="left:679px;top:401px"></div>
<div class="t" style="left:696px;top:402px;transform:scaleX(0.9);transform-origin:0 0">PGM43</div>
<div class="cb" style="left:733px;top:401px"></div>
<div class="t" style="left:750px;top:402px;transform:scaleX(0.9);transform-origin:0 0">PGM44</div>
<div class="cb" style="left:571px;top:417px"></div>
<div class="t" style="left:588px;top:418px;transform:scaleX(0.9);transform-origin:0 0">PGM45</div>
<div class="cb" style="left:625px;top:417px"></div>
<div class="t" style="left:642px;top:418px;transform:scaleX(0.9);transform-origin:0 0">PGM46</div>
<div class="cb" style="left:679px;top:417px"></div>
<div class="t" style="left:696px;top:418px;transform:scaleX(0.9);transform-origin:0 0">PGM47</div>
<div class="cb" style="left:733px;top:417px"></div>
<div class="t" style="left:750px;top:418px;transform:scaleX(0.9);transform-origin:0 0">PGM48</div>
<div class="" style="left:254px;top:782px;width:1137px;height:15px;background:#a0a0a0"></div>
<div class="t" style="left:258px;top:783px;color:#fff;font-size:12px;line-height:14px;letter-spacing:0">Utilities</div>
<div style="left:1376px;top:784px;width:7px;height:7px;border:2px solid #08a808;border-radius:2px;background:#fff;box-shadow:0 0 0 1px #fff"><div style="left:1px;top:2px;width:5px;height:4px;background:#48d040"></div></div>
<div class="" style="left:257px;top:820px;width:601px;height:188px;border-left:1px solid #fff;border-top:1px solid #fff;border-right:1px solid #696969;border-bottom:1px solid #696969;box-shadow:inset -1px -1px #a0a0a0,inset 1px 1px #e3e3e3;background:#f0f0f0"></div>
<div class="tab" style="left:259px;top:802px;width:57px;height:18px"><div class="t" style="left:0;width:100%;text-align:center;top:3px">Navigator</div></div>
<div class="tab" style="left:318px;top:802px;width:60px;height:18px"><div class="t" style="left:0;width:100%;text-align:center;top:3px">Search (0)</div></div>
<div class="tab" style="left:380px;top:802px;width:83px;height:18px"><div class="t" style="left:0;width:100%;text-align:center;top:3px">Documentation</div></div>
<div class="tab" style="left:463px;top:800px;width:77px;height:21px;z-index:2"><div class="t" style="left:0;width:100%;text-align:center;top:3px">Messages (0)</div></div>
<svg style="position:absolute;left:263px;top:826px" width="24" height="24" shape-rendering="crispEdges"><rect x="5" y="0" width="13" height="1" fill="#fafafa"/><rect x="3" y="1" width="3" height="1" fill="#fafafa"/><rect x="6" y="1" width="11" height="1" fill="#a0a0a0"/><rect x="17" y="1" width="4" height="1" fill="#fafafa"/><rect x="3" y="2" width="1" height="1" fill="#fafafa"/><rect x="4" y="2" width="16" height="1" fill="#a0a0a0"/><rect x="20" y="2" width="1" height="1" fill="#fafafa"/><rect x="3" y="3" width="1" height="1" fill="#fafafa"/><rect x="4" y="3" width="16" height="1" fill="#a0a0a0"/><rect x="20" y="3" width="1" height="1" fill="#fafafa"/><rect x="3" y="4" width="1" height="1" fill="#fafafa"/><rect x="4" y="4" width="16" height="1" fill="#a0a0a0"/><rect x="20" y="4" width="1" height="1" fill="#fafafa"/><rect x="3" y="5" width="1" height="1" fill="#fafafa"/><rect x="4" y="5" width="16" height="1" fill="#a0a0a0"/><rect x="20" y="5" width="1" height="1" fill="#fafafa"/><rect x="3" y="6" width="1" height="1" fill="#fafafa"/><rect x="4" y="6" width="16" height="1" fill="#a0a0a0"/><rect x="20" y="6" width="1" height="1" fill="#fafafa"/><rect x="3" y="7" width="1" height="1" fill="#fafafa"/><rect x="4" y="7" width="16" height="1" fill="#a0a0a0"/><rect x="20" y="7" width="1" height="1" fill="#fafafa"/><rect x="3" y="8" width="1" height="1" fill="#fafafa"/><rect x="4" y="8" width="16" height="1" fill="#a0a0a0"/><rect x="20" y="8" width="1" height="1" fill="#fafafa"/><rect x="3" y="9" width="1" height="1" fill="#fafafa"/><rect x="4" y="9" width="16" height="1" fill="#a0a0a0"/><rect x="20" y="9" width="1" height="1" fill="#fafafa"/><rect x="3" y="10" width="1" height="1" fill="#fafafa"/><rect x="4" y="10" width="16" height="1" fill="#a0a0a0"/><rect x="20" y="10" width="1" height="1" fill="#fafafa"/><rect x="3" y="11" width="1" height="1" fill="#fafafa"/><rect x="4" y="11" width="16" height="1" fill="#a0a0a0"/><rect x="20" y="11" width="1" height="1" fill="#fafafa"/><rect x="3" y="12" width="1" height="1" fill="#fafafa"/><rect x="4" y="12" width="16" height="1" fill="#a0a0a0"/><rect x="20" y="12" width="1" height="1" fill="#fafafa"/><rect x="3" y="13" width="1" height="1" fill="#fafafa"/><rect x="4" y="13" width="16" height="1" fill="#a0a0a0"/><rect x="20" y="13" width="1" height="1" fill="#fafafa"/><rect x="3" y="14" width="1" height="1" fill="#fafafa"/><rect x="4" y="14" width="16" height="1" fill="#a0a0a0"/><rect x="20" y="14" width="1" height="1" fill="#fafafa"/><rect x="3" y="15" width="1" height="1" fill="#fafafa"/><rect x="4" y="15" width="16" height="1" fill="#a0a0a0"/><rect x="20" y="15" width="1" height="1" fill="#fafafa"/><rect x="0" y="16" width="4" height="1" fill="#fafafa"/><rect x="4" y="16" width="16" height="1" fill="#a0a0a0"/><rect x="20" y="16" width="4" height="1" fill="#fafafa"/><rect x="0" y="17" width="1" height="1" fill="#fafafa"/><rect x="1" y="17" width="22" height="1" fill="#a0a0a0"/><rect x="23" y="17" width="1" height="1" fill="#fafafa"/><rect x="0" y="18" width="1" height="1" fill="#fafafa"/><rect x="1" y="18" width="22" height="1" fill="#a0a0a0"/><rect x="23" y="18" width="1" height="1" fill="#fafafa"/><rect x="0" y="19" width="1" height="1" fill="#fafafa"/><rect x="1" y="19" width="22" height="1" fill="#a0a0a0"/><rect x="23" y="19" width="1" height="1" fill="#fafafa"/><rect x="0" y="20" width="1" height="1" fill="#fafafa"/><rect x="1" y="20" width="22" height="1" fill="#a0a0a0"/><rect x="23" y="20" width="1" height="1" fill="#fafafa"/><rect x="0" y="21" width="2" height="1" fill="#fafafa"/><rect x="2" y="21" width="20" height="1" fill="#a0a0a0"/><rect x="22" y="21" width="2" height="1" fill="#fafafa"/><rect x="1" y="22" width="3" height="1" fill="#fafafa"/><rect x="4" y="22" width="16" height="1" fill="#a0a0a0"/><rect x="20" y="22" width="3" height="1" fill="#fafafa"/><rect x="3" y="23" width="18" height="1" fill="#fafafa"/></svg>
<div class="" style="left:261px;top:852px;width:593px;height:152px;border:1px solid #696969;background:#fff"></div>
<div class="" style="left:262px;top:853px;width:593px;height:15px;background:#f0f0f0;border-bottom:1px solid #a0a0a0;box-shadow:inset 1px 1px #fff"></div>
<div class="" style="left:356px;top:854px;width:1px;height:15px;background:#a0a0a0"></div>
<div class="" style="left:357px;top:854px;width:1px;height:15px;background:#fff"></div>
<div class="t" style="left:268px;top:856px;">To Archive</div>
<div class="t" style="left:362px;top:856px;">Info</div>
<div class="sk" style="left:871px;top:800px;width:515px;height:208px;background:#fff"></div>
<div class="" style="left:873px;top:802px;width:513px;height:16px;background:#f0f0f0;border-bottom:1px solid #a0a0a0;box-shadow:inset 1px 1px #fff,inset -1px 0 #a0a0a0"></div>
<div class="t" style="left:878px;top:805px;">Clipboard</div>
<div class="" style="left:8px;top:1015px;width:198px;height:15px;border-top:1px solid #a0a0a0;border-left:1px solid #a0a0a0;border-bottom:1px solid #fff;border-right:1px solid #fff"></div>
<div class="" style="left:210px;top:1015px;width:196px;height:15px;border-top:1px solid #a0a0a0;border-left:1px solid #a0a0a0;border-bottom:1px solid #fff;border-right:1px solid #fff"></div>
<div class="" style="left:410px;top:1015px;width:979px;height:15px;border-top:1px solid #a0a0a0;border-left:1px solid #a0a0a0;border-bottom:1px solid #fff;border-right:1px solid #fff"></div>
<div class="t" style="left:212px;top:1017px;font-size:12px;line-height:14px;letter-spacing:0">Project modified</div>
<svg style="position:absolute;left:1378px;top:1019px" width="13" height="13" viewBox="0 0 13 13"><path d="M12 1 L1 12 M12 5 L5 12 M12 9 L9 12" stroke="#fff" stroke-width="1" transform="translate(1,1)"/><path d="M12 1 L1 12 M12 5 L5 12 M12 9 L9 12" stroke="#8a8a8a" stroke-width="1.2"/></svg>
</body></html>
